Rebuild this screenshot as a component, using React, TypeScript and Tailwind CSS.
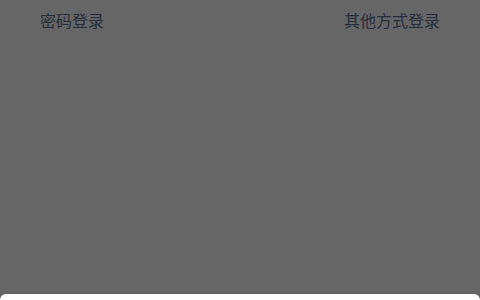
export default function App() {
  return (
    <div
      className="relative w-[480px] h-[300px] overflow-hidden bg-[#666666] flex flex-col"
      style={{ fontFamily: '"Noto Sans CJK SC", "Noto Sans", sans-serif' }}
    >
      <div className="flex justify-between items-center px-10 h-10 text-[16px] text-[#262d3a]">
        <span>密码登录</span>
        <span>其他方式登录</span>
      </div>
      <div className="flex-1" />
      <div className="h-[6px] bg-white rounded-t-[8px]" />
    </div>
  );
}
